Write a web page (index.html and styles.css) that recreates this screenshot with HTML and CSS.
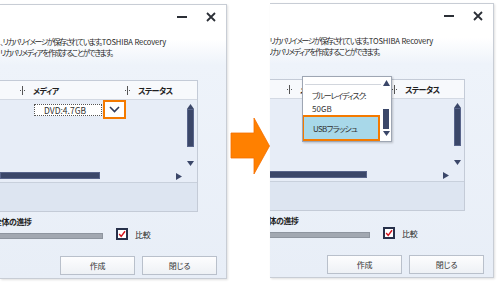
FILE: index.html
```html
<html>
    <head>
        <link rel="stylesheet" href="styles.css">
    </head>
    <body>
        <div class="stage">
            <!-- before: DVD selected in the media combo -->
            <section class="panel panel-left">
                <div class="window">
                    <div class="titlebar">
                        <span class="tb-min"></span>
                        <svg class="tb-close" width="10" height="10" viewBox="0 0 10 10"><path d="M1 1 L9 9 M9 1 L1 9" stroke="#2b2f36" stroke-width="1.8" fill="none"/></svg>
                    </div>
                    <div class="intro">
                        <p>、リカバリイメージが保存されています。<span class="latin">TOSHIBA Recovery</span></p>
                        <p>リカバリメディアを作成することができます。</p>
                    </div>
                    <div class="listview">
                        <div class="lv-head">
                            <span class="col col-media"><i class="split"></i>メディア</span>
                            <span class="col col-status"><i class="split"></i>ステータス</span>
                        </div>
                        <div class="lv-body">
                            <div class="lv-rows">
                                <div class="combo">
                                    <span class="combo-value">DVD:4.7GB</span>
                                    <span class="combo-btn">
                                        <svg width="11" height="7" viewBox="0 0 11 7"><path d="M1 1 L5.5 5.5 L10 1" stroke="#2e3a5c" stroke-width="1.6" fill="none"/></svg>
                                    </span>
                                </div>
                            </div>
                            <div class="vscroll">
                                <svg width="7" height="5" viewBox="0 0 7 5"><path d="M3.5 0 L7 5 L0 5 Z" fill="#3b4769"/></svg>
                                <span class="v-thumb"></span>
                                <svg class="v-down" width="7" height="5" viewBox="0 0 7 5"><path d="M0 0 L7 0 L3.5 5 Z" fill="#3b4769"/></svg>
                            </div>
                        </div>
                        <div class="hscroll">
                            <span class="h-thumb"></span>
                            <svg class="h-right" width="6" height="7" viewBox="0 0 6 7"><path d="M0 0 L6 3.5 L0 7 Z" fill="#3b4769"/></svg>
                        </div>
                        <div class="lv-foot"></div>
                    </div>
                    <div class="progress-label">全体の進捗</div>
                    <div class="progress-row">
                        <div class="bar"></div>
                        <label class="check">
                            <span class="box"><svg width="10" height="10" viewBox="0 0 10 10"><path d="M1.5 5 L4 8 L8.8 1.5" stroke="#d4141c" stroke-width="1.8" fill="none"/></svg></span>
                            比較
                        </label>
                    </div>
                    <div class="buttons">
                        <button class="btn">作成</button>
                        <button class="btn">閉じる</button>
                    </div>
                </div>
            </section>

            <div class="arrow">
                <svg width="43" height="57" viewBox="0 0 43 57"><path d="M4 15 L27 15 L27 0 L42.5 28 L27 56 L27 40 L4 40 Z" fill="#ff8000" stroke="#f56f00" stroke-width="0.8"/></svg>
            </div>

            <!-- after: dropdown open, USB flash selected -->
            <section class="panel panel-right">
                <div class="window">
                    <div class="titlebar">
                        <span class="tb-min"></span>
                        <svg class="tb-close" width="10" height="10" viewBox="0 0 10 10"><path d="M1 1 L9 9 M9 1 L1 9" stroke="#2b2f36" stroke-width="1.8" fill="none"/></svg>
                    </div>
                    <div class="intro">
                        <p>、リカバリイメージが保存されています。<span class="latin">TOSHIBA Recovery</span></p>
                        <p>リカバリメディアを作成することができます。</p>
                    </div>
                    <div class="listview">
                        <div class="lv-head">
                            <span class="col col-media"><i class="split"></i>メディア</span>
                            <span class="col col-status"><i class="split"></i>ステータス</span>
                        </div>
                        <div class="lv-body">
                            <div class="lv-rows"></div>
                            <div class="vscroll">
                                <svg width="7" height="5" viewBox="0 0 7 5"><path d="M3.5 0 L7 5 L0 5 Z" fill="#3b4769"/></svg>
                                <span class="v-thumb"></span>
                                <svg class="v-down" width="7" height="5" viewBox="0 0 7 5"><path d="M0 0 L7 0 L3.5 5 Z" fill="#3b4769"/></svg>
                            </div>
                        </div>
                        <div class="hscroll">
                            <span class="h-thumb"></span>
                            <svg class="h-right" width="6" height="7" viewBox="0 0 6 7"><path d="M0 0 L6 3.5 L0 7 Z" fill="#3b4769"/></svg>
                        </div>
                        <div class="lv-foot"></div>
                    </div>
                    <div class="progress-label">全体の進捗</div>
                    <div class="progress-row">
                        <div class="bar"></div>
                        <label class="check">
                            <span class="box"><svg width="10" height="10" viewBox="0 0 10 10"><path d="M1.5 5 L4 8 L8.8 1.5" stroke="#d4141c" stroke-width="1.8" fill="none"/></svg></span>
                            比較
                        </label>
                    </div>
                    <div class="buttons">
                        <button class="btn">作成</button>
                        <button class="btn">閉じる</button>
                    </div>
                </div>

                <div class="dropdown">
                    <ul class="dd-list">
                        <li>ブルーレイディスク:<br><span class="size">25GB</span></li>
                        <li>ブルーレイディスク:<br><span class="size">50GB</span></li>
                        <li class="selected">USBフラッシュ</li>
                    </ul>
                    <div class="dd-scroll">
                        <svg width="7" height="6" viewBox="0 0 7 6"><path d="M3.5 0 L7 6 L0 6 Z" fill="#3b4769"/></svg>
                        <span class="dd-thumb"></span>
                        <svg class="dd-down" width="7" height="5" viewBox="0 0 7 5"><path d="M0 0 L7 0 L3.5 5 Z" fill="#3b4769"/></svg>
                    </div>
                </div>
            </section>
        </div>
    </body>
</html>
```

FILE: styles.css
```css
*{
    box-sizing: border-box;
}
body{
    margin: 0;
    width: 500px;
    height: 282px;
    overflow: hidden;
    background: #fff;
    color: #1f1f1f;
    font-family: "Noto Sans CJK JP", "Noto Sans", sans-serif;
    font-feature-settings: "palt";
    font-size: 8px;
}
.stage{
    display: flex;
    align-items: flex-start;
}

/* window fragments */
.panel{
    position: relative;
    overflow: hidden;
    height: 275px;
    border: 1px solid #c8cdd5;
    border-left: none;
    box-shadow: 1px 1px 2px rgba(0,0,0,0.12);
}
.panel-left{
    width: 227px;
    margin-top: 4px;
}
.panel-right{
    width: 224px;
    margin-top: 3px;
}
.panel-right .window{
    margin-left: -3px;
}
.window{
    width: 227px;
    height: 100%;
    display: flex;
    flex-direction: column;
    background: linear-gradient(#fff 0px, #fff 34px, #eef3fa 60px, #e8eef7 100%);
}

.titlebar{
    height: 25px;
    display: flex;
    align-items: center;
    justify-content: flex-end;
    gap: 19px;
    padding: 0 11px 2px 0;
}
.tb-min{
    width: 10px;
    height: 2px;
    margin-top: 1px;
    background: #2b2f36;
}

.intro{
    margin-top: 6px;
    font-size: 7.6px;
    line-height: 11px;
    letter-spacing: -1.3px;
    white-space: nowrap;
}
.intro p{
    margin: 0;
}
.latin{
    letter-spacing: -0.1px;
}

/* list view */
.listview{
    margin-top: 22px;
    width: 198px;
    border: 1px solid #c4cbd7;
    border-left: none;
    display: flex;
    flex-direction: column;
}
.lv-head{
    height: 19px;
    border-bottom: 1px solid #d3d9e3;
    background: #f7f9fc;
    display: flex;
    align-items: center;
    font-weight: bold;
    letter-spacing: -0.6px;
}
.col{
    display: flex;
    align-items: center;
}
.col-media{
    margin-left: 20px;
    width: 105px;
}
.split{
    position: relative;
    width: 5px;
    height: 9px;
    margin-right: 8px;
    background: linear-gradient(90deg, transparent 2px, #555 2px, #555 3px, transparent 3px);
}
.split::before,
.split::after{
    content: "";
    position: absolute;
    top: 4px;
    width: 1px;
    height: 1px;
    background: #555;
}
.split::before{ left: 0; }
.split::after{ right: 0; }

.lv-body{
    height: 72px;
    display: flex;
    background: #e7edf7;
}
.lv-rows{
    flex: 1;
}
.combo{
    display: flex;
    align-items: center;
    margin-left: 34px;
    height: 19px;
}
.combo-value{
    width: 68px;
    height: 12px;
    border: 1px dotted #555;
    background: #fff;
    padding-left: 9px;
    line-height: 10px;
    font-size: 8.5px;
    color: #333;
}
.combo-btn{
    width: 23px;
    height: 19px;
    margin-left: 1px;
    border: 2px solid #f47a00;
    background: #fff;
    display: flex;
    align-items: center;
    justify-content: center;
}
.vscroll{
    width: 7px;
    margin-right: 3px;
    padding: 4px 0 6px;
    display: flex;
    flex-direction: column;
}
.v-thumb{
    height: 38px;
    background: #3b4769;
    border: 1px solid #58648a;
}
.v-down{
    margin-top: auto;
}
.hscroll{
    height: 10px;
    display: flex;
    align-items: flex-start;
    background: #e7edf7;
}
.h-thumb{
    width: 100px;
    height: 7px;
    background: #3b4769;
    border: 1px solid #58648a;
}
.h-right{
    margin-left: 76px;
    margin-top: 1px;
}
.lv-foot{
    height: 29px;
    border-top: 1px solid #c8d0dc;
    background: #dde5f1;
}

/* progress + options */
.progress-label{
    margin-top: 4px;
    line-height: 12px;
    font-weight: bold;
    letter-spacing: -0.5px;
    text-indent: -6px;
    white-space: nowrap;
}
.progress-row{
    height: 12px;
    display: flex;
    align-items: center;
}
.bar{
    width: 103px;
    height: 6px;
    margin-top: 4px;
    background: #a2a8b1;
    border: 1px solid #8e959f;
    border-left: none;
}
.check{
    display: flex;
    align-items: center;
    gap: 7px;
    margin-left: 13px;
    letter-spacing: -0.3px;
}
.box{
    width: 12px;
    height: 12px;
    border: 2px solid #27304a;
    background: #fff;
    display: flex;
    align-items: center;
    justify-content: center;
}

.buttons{
    margin-top: 16px;
    display: flex;
    justify-content: flex-end;
    gap: 7px;
    padding-right: 10px;
}
.btn{
    width: 75px;
    height: 19px;
    padding: 0;
    border: 1px solid #b9c0cb;
    background: linear-gradient(#fdfdfe, #eef1f5);
    font-family: inherit;
    font-feature-settings: "palt";
    font-size: 8px;
    letter-spacing: -0.3px;
    color: #333;
}

/* arrow between the two states */
.arrow{
    width: 43px;
    padding-top: 118px;
    display: flex;
}
.arrow svg{
    display: block;
}

/* open dropdown list */
.dropdown{
    position: absolute;
    top: 72px;
    left: 32px;
    width: 90px;
    height: 66px;
    display: flex;
    background: #fff;
    border: 1px solid #9ea6b3;
    box-shadow: 1px 1px 2px rgba(0,0,0,0.2);
}
.dd-list{
    width: 78px;
    margin: 0;
    padding: 0;
    list-style: none;
    overflow: hidden;
    display: flex;
    flex-direction: column;
    justify-content: flex-end;
    line-height: 13px;
    letter-spacing: -1.3px;
    white-space: nowrap;
}
.dd-list li{
    flex-shrink: 0;
    margin-left: 2px;
    padding: 4px 0 0 7px;
    border-top: 1px solid #d2d6dd;
    color: #333;
}
.dd-list li:first-child{
    padding-bottom: 4px;
}
.dd-list .size{
    letter-spacing: 0;
}
.dd-list li.selected{
    margin: 0 1px 0 -1px;
    height: 26px;
    padding: 5px 0 0 9px;
    border: 2px solid #f47a00;
    background: #a8d8e9;
    letter-spacing: -0.7px;
}
.dd-scroll{
    width: 10px;
    padding: 3px 0 4px 0;
    display: flex;
    flex-direction: column;
    align-items: center;
}
.dd-thumb{
    width: 6px;
    height: 20px;
    margin-top: 23px;
    background: #3b4769;
}
.dd-down{
    margin-top: 2px;
}
```
